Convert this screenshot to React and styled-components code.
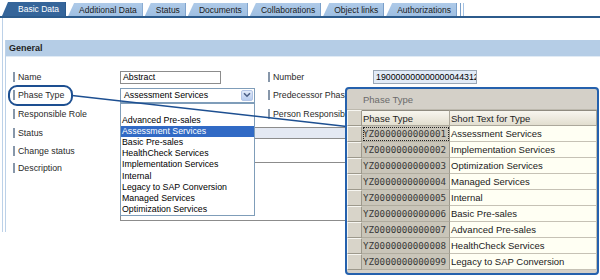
import React from 'react';
import styled, { createGlobalStyle } from 'styled-components';

const GlobalStyle = createGlobalStyle`
  html, body { margin: 0; padding: 0; background: #fff; }
  body { font-family: "Liberation Sans", Arial, sans-serif; overflow: hidden; }
  * { box-sizing: border-box; }
`;

const Page = styled.div`
  position: relative;
  width: 600px;
  height: 280px;
  overflow: hidden;
  background: #fff;
`;

const TabBar = styled.div`
  display: flex;
  align-items: flex-end;
  gap: 2px;
  height: 18px;
  padding-left: 2px;
  border-bottom: 2px solid #2c5b8c;
`;

const Tab = styled.div`
  height: ${p => (p.$active ? 14 : 13)}px;
  padding: 0 ${p => (p.$active ? 7 : 6)}px 0 ${p => (p.$active ? 16 : 11)}px;
  display: flex;
  align-items: center;
  font-size: 8.5px;
  white-space: nowrap;
  color: ${p => (p.$active ? '#ffffff' : '#1b1b1b')};
  background: ${p => (p.$active ? '#35659a' : 'linear-gradient(#aecae8, #9fbfe2)')};
  clip-path: polygon(6px 0, 100% 0, 100% 100%, 0 100%);
  box-shadow: inset -1px 0 0 ${p => (p.$active ? '#2c5b8c' : '#7a9fc9')};
`;

const TabEnd = styled.div`
  width: 4px;
  height: 13px;
  margin-left: 1px;
  border-left: 1px solid #7a9fc9;
  border-right: 1px solid #a5c3e4;
`;

const Content = styled.div`
  margin-left: 2px;
  border-left: 1px solid #bcd1e8;
  padding: 22px 0 0 2px;
`;

const Section = styled.div`
  border-left: 1px solid #bcd1e8;
`;

const SectionHeader = styled.div`
  height: 17px;
  display: flex;
  align-items: center;
  padding-left: 3px;
  background: #b5cde6;
  border-bottom: 1px solid #e1ebf5;
  font-size: 9px;
  font-weight: bold;
  color: #1e1e1e;
`;

const Form = styled.div`
  display: grid;
  grid-template-columns: 107px 148px 105px 1fr;
  grid-template-rows: 18px 18px 19px 19px 17px auto;
  padding: 11px 0 11px 7px;
  font-size: 8.8px;
  color: #222;
`;

const Label = styled.div`
  height: 17px;
  align-self: ${p => (p.$top ? 'start' : 'center')};
  display: flex;
  align-items: center;
  gap: 3px;
  white-space: nowrap;
  color: #2a2a2a;
  &::before {
    content: '';
    width: 2px;
    height: 10px;
    background: #8797aa;
    flex: none;
  }
`;

const Cell = styled.div`
  grid-column: ${p => p.$col || 'auto'};
  display: flex;
  align-items: ${p => (p.$top ? 'flex-start' : 'center')};
  min-width: 0;
`;

const Input = styled.div`
  width: ${p => p.$w}px;
  height: ${p => p.$h || 13}px;
  flex: none;
  display: flex;
  align-items: center;
  padding-left: 2px;
  overflow: hidden;
  white-space: nowrap;
  border: 1px solid ${p => (p.$blue ? '#9aa7b6' : '#8c8c8c')};
  background: ${p => (p.$blue ? '#e2ebf7' : p.$tint ? '#e4e9f3' : '#ffffff')};
  color: #000;
  margin-top: ${p => p.$mt || 0}px;
`;

const SelectBox = styled.div`
  position: relative;
  width: 135px;
  height: 15px;
  border: 1px solid #7f9db9;
  background: #fff;
  display: flex;
  align-items: center;
  padding-left: 3px;
  color: #000;
`;

const ArrowButton = styled.div`
  position: absolute;
  right: 1px;
  top: 1px;
  width: 12px;
  height: 11px;
  border: 1px solid #b3c5e6;
  border-radius: 2px;
  background: linear-gradient(#e1eaf9, #b8ccef);
  display: flex;
  align-items: center;
  justify-content: center;
`;

const DropList = styled.div`
  position: absolute;
  left: -1px;
  top: 14px;
  width: 135px;
  border: 1px solid #7f9db9;
  background: #fff;
  z-index: 2;
`;

const DropItem = styled.div`
  height: 11.2px;
  line-height: 11.2px;
  padding-left: 1px;
  white-space: nowrap;
  color: ${p => (p.$sel ? '#fff' : '#000')};
  background: ${p => (p.$sel ? '#316ac5' : 'transparent')};
`;

const Callout = styled.svg`
  position: absolute;
  left: 0;
  top: 0;
  z-index: 3;
  pointer-events: none;
`;

const Popup = styled.div`
  position: absolute;
  left: 345px;
  top: 87px;
  width: 254px;
  height: 188px;
  border: 2px solid #2561ad;
  border-radius: 4px;
  background: #d4d0c8;
  overflow: hidden;
  z-index: 4;
  display: flex;
  flex-direction: column;
  font-size: 9.5px;
`;

const PopupTitle = styled.div`
  height: 21px;
  flex: none;
  display: flex;
  align-items: center;
  padding-left: 16px;
  color: #6b6b6b;
  border-bottom: 1px solid #bdb9ae;
`;

const Table = styled.div`
  display: grid;
  grid-template-columns: 15px 88px 1fr;
  grid-auto-rows: 16px;
`;

const HeadCell = styled.div`
  display: flex;
  align-items: center;
  padding-left: 1px;
  white-space: nowrap;
  color: #1e1e1e;
  background: linear-gradient(#f8f6ef, #e2decf);
  border-top: 1px solid #8f8b80;
  border-right: 1px solid #aca89b;
  border-bottom: 1px solid #aca89b;
`;

const SelCell = styled.div`
  background: #d8d4c9;
  border-top: 1px solid #f7f6f1;
  border-left: 1px solid #f7f6f1;
  border-right: 1px solid #9d998c;
  border-bottom: 1px solid #9d998c;
`;

const CodeCell = styled.div`
  display: flex;
  align-items: center;
  padding-left: 1px;
  white-space: nowrap;
  overflow: hidden;
  font-family: "DejaVu Sans Mono", "Liberation Mono", monospace;
  font-size: 9.2px;
  color: #383838;
  background: #c9c5b9;
  border-right: 1px solid #9e9a8e;
  border-bottom: 1px solid #b0ac9f;
  outline: ${p => (p.$focus ? '1px dotted #222' : 'none')};
  outline-offset: -2px;
`;

const TextCell = styled.div`
  display: flex;
  align-items: center;
  padding-left: 1px;
  white-space: nowrap;
  overflow: hidden;
  color: #1a1a1a;
  background: #fffff3;
  border-right: 1px solid #c6c2b5;
  border-bottom: 1px solid #c6c2b5;
`;

const tabs = ['Basic Data', 'Additional Data', 'Status', 'Documents', 'Collaborations', 'Object links', 'Authorizations'];

const options = [
  '',
  'Advanced Pre-sales',
  'Assessment Services',
  'Basic Pre-sales',
  'HealthCheck Services',
  'Implementation Services',
  'Internal',
  'Legacy to SAP Conversion',
  'Managed Services',
  'Optimization Services',
];

const rows = [
  ['YZ0000000000001', 'Assessment Services'],
  ['YZ0000000000002', 'Implementation Services'],
  ['YZ0000000000003', 'Optimization Services'],
  ['YZ0000000000004', 'Managed Services'],
  ['YZ0000000000005', 'Internal'],
  ['YZ0000000000006', 'Basic Pre-sales'],
  ['YZ0000000000007', 'Advanced Pre-sales'],
  ['YZ0000000000008', 'HealthCheck Services'],
  ['YZ0000000000099', 'Legacy to SAP Conversion'],
];

export default function App() {
  return (
    <Page>
      <GlobalStyle />
      <TabBar>
        {tabs.map((t, i) => (
          <Tab key={t} $active={i === 0}>{t}</Tab>
        ))}
        <TabEnd />
      </TabBar>
      <Content>
        <Section>
          <SectionHeader>General</SectionHeader>
          <Form>
            <Label>Name</Label>
            <Cell><Input $w={101}>Abstract</Input></Cell>
            <Label>Number</Label>
            <Cell><Input $w={104} $h={14} $blue>190000000000000044312</Input></Cell>

            <Label>Phase Type</Label>
            <Cell>
              <SelectBox>
                Assessment Services
                <ArrowButton>
                  <svg width="8" height="6" viewBox="0 0 8 6">
                    <path d="M1 1.2 L4 4.2 L7 1.2" fill="none" stroke="#4b5f86" strokeWidth="1.6" />
                  </svg>
                </ArrowButton>
                <DropList>
                  {options.map((o, i) => (
                    <DropItem key={i} $sel={o === 'Assessment Services'}>{o || '\u00a0'}</DropItem>
                  ))}
                </DropList>
              </SelectBox>
            </Cell>
            <Label>Predecessor Phase</Label>
            <Cell><Input $w={135} $h={15} $tint /></Cell>

            <Label>Responsible Role</Label>
            <Cell />
            <Label>Person Responsible</Label>
            <Cell><Input $w={135} $tint /></Cell>

            <Label>Status</Label>
            <Cell $col="2 / 5"><Input $w={260} $h={12} $tint /></Cell>

            <Label>Change status</Label>
            <Cell $col="2 / 5"><Input $w={100} $h={12} /></Cell>

            <Label $top>Description</Label>
            <Cell $col="2 / 5" $top><Input $w={260} $h={59} $mt={3} /></Cell>
          </Form>
        </Section>
      </Content>

      <Callout width="600" height="280" viewBox="0 0 600 280">
        <rect x="9" y="86" width="63" height="19" rx="8" ry="8" fill="none" stroke="#1d4f91" strokeWidth="2" />
        <line x1="72" y1="95.5" x2="360" y2="128" stroke="#1d4f91" strokeWidth="1.6" />
      </Callout>

      <Popup>
        <PopupTitle>Phase Type</PopupTitle>
        <Table>
          <SelCell />
          <HeadCell>Phase Type</HeadCell>
          <HeadCell>Short Text for Type</HeadCell>
          {rows.map(([code, text], i) => (
            <React.Fragment key={code}>
              <SelCell />
              <CodeCell $focus={i === 0}>{code}</CodeCell>
              <TextCell>{text}</TextCell>
            </React.Fragment>
          ))}
        </Table>
      </Popup>
    </Page>
  );
}
